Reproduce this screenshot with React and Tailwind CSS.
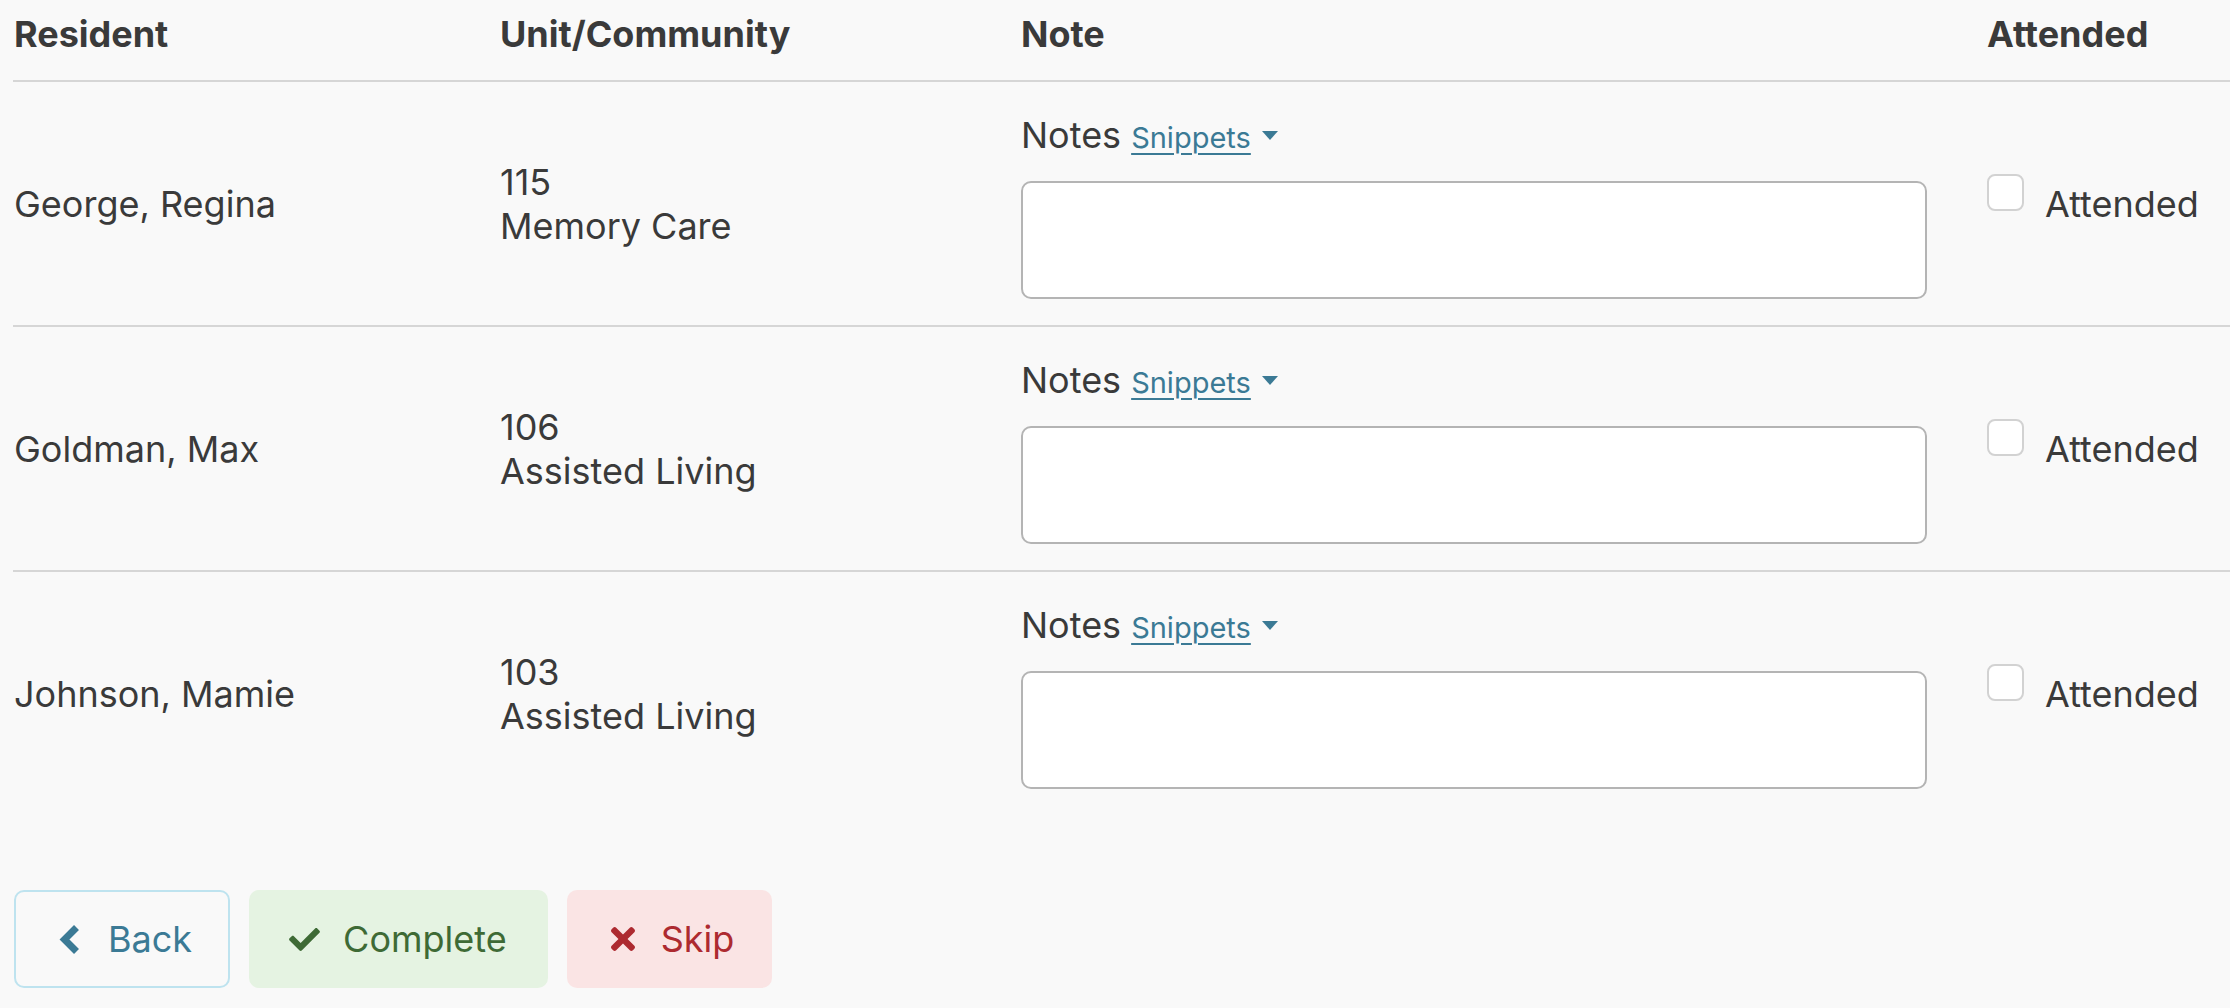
import React from "react";

// attendance sheet for one activity: residents, their unit, a note box and the attended toggle
const RESIDENTS = [
  { name: "George, Regina", unit: "115", community: "Memory Care" },
  { name: "Goldman, Max", unit: "106", community: "Assisted Living" },
  { name: "Johnson, Mamie", unit: "103", community: "Assisted Living" },
];

const COLS = "grid grid-cols-[487px_521px_966px_1fr]";

const ChevronLeft = () => (
  <svg width="23" height="31" viewBox="0 0 23 31" className="shrink-0">
    <polyline
      points="18.5,3.5 6.5,15.5 18.5,27.5"
      fill="none"
      stroke="currentColor"
      strokeWidth="7"
      strokeLinejoin="miter"
    />
  </svg>
);

const Check = () => (
  <svg width="31" height="23" viewBox="0 65 512 382" className="shrink-0" fill="currentColor">
    <path d="M173.898 439.404l-166.4-166.4c-9.997-9.997-9.997-26.206 0-36.204l36.203-36.204c9.997-9.998 26.207-9.998 36.204 0L192 312.69 432.095 72.596c9.997-9.997 26.207-9.997 36.204 0l36.203 36.204c9.997 9.997 9.997 26.206 0 36.204l-294.4 294.401c-9.998 9.997-26.207 9.997-36.204-.001z" />
  </svg>
);

const Times = () => (
  <svg width="24" height="24" viewBox="0 80 352 352" className="shrink-0" fill="currentColor">
    <path d="M242.72 256l100.07-100.07c12.28-12.28 12.28-32.19 0-44.48l-22.24-22.24c-12.28-12.28-32.19-12.28-44.48 0L176 189.28 75.93 89.21c-12.28-12.28-32.19-12.28-44.48 0L9.21 111.45c-12.28 12.28-12.28 32.19 0 44.48L109.28 256 9.21 356.07c-12.28 12.28-12.28 32.19 0 44.48l22.24 22.24c12.28 12.28 32.2 12.28 44.48 0L176 322.72l100.07 100.07c12.28 12.28 32.2 12.28 44.48 0l22.24-22.24c12.28-12.28 12.28-32.19 0-44.48L242.72 256z" />
  </svg>
);

const ResidentRow = ({ r, last }) => (
  <div className={`${COLS} ${last ? "" : "border-b-2 border-[#d6d6d6]"}`}>
    <div className="flex items-center pl-[1px]">{r.name}</div>
    <div className="flex flex-col justify-center leading-[44px]">
      <span>{r.unit}</span>
      <span>{r.community}</span>
    </div>
    <div className="pt-[29px] pb-[26px]">
      <div className="flex items-baseline h-[48px] leading-[48px]">
        <span>Notes</span>
        <button
          type="button"
          className="ml-[10px] text-[29px] text-[#3b7a95] underline decoration-2 underline-offset-[5px]"
        >
          Snippets
        </button>
        <svg width="16" height="9" viewBox="0 0 16 9" className="ml-[11px] self-center text-[#3b7a95]">
          <polygon points="0,0 16,0 8,9" fill="currentColor" />
        </svg>
      </div>
      <textarea className="mt-[22px] block w-[906px] h-[118px] resize-none rounded-[10px] border-2 border-[#b4b4b4] bg-white outline-none" />
    </div>
    <label className="flex items-center">
      <input
        type="checkbox"
        className="appearance-none w-[37px] h-[37px] mb-[22px] rounded-[8px] border-2 border-[#d2d2d2] bg-white"
      />
      <span className="ml-[21px]">Attended</span>
    </label>
  </div>
);

export default function App() {
  return (
    <div className="min-h-screen bg-[#f9f9f9] pl-[13px] font-['Inter',sans-serif] text-[36px] leading-[48px] text-[#3a3a3a]">
      <div className={`${COLS} pt-[10px] pb-[22px] font-bold border-b-2 border-[#d6d6d6]`}>
        <div className="pl-[1px]">Resident</div>
        <div>Unit/Community</div>
        <div>Note</div>
        <div>Attended</div>
      </div>

      {RESIDENTS.map((r, i) => (
        <ResidentRow key={r.name} r={r} last={i === RESIDENTS.length - 1} />
      ))}

      <div className="mt-[75px] flex gap-[19px] pl-[1px]">
        <button
          type="button"
          className="flex items-center h-[98px] pl-[42px] pr-[36px] rounded-[10px] border-2 border-[#bee3ef] text-[#3b7a95]"
        >
          <ChevronLeft />
          <span className="ml-[27px]">Back</span>
        </button>
        <button
          type="button"
          className="flex items-center h-[98px] pl-[40px] pr-[41px] rounded-[10px] bg-[#e5f3e2] text-[#3e6a35]"
        >
          <Check />
          <span className="ml-[23px]">Complete</span>
        </button>
        <button
          type="button"
          className="flex items-center h-[98px] pl-[44px] pr-[38px] rounded-[10px] bg-[#fae4e4] text-[#ad2a30]"
        >
          <Times />
          <span className="ml-[26px]">Skip</span>
        </button>
      </div>
    </div>
  );
}
